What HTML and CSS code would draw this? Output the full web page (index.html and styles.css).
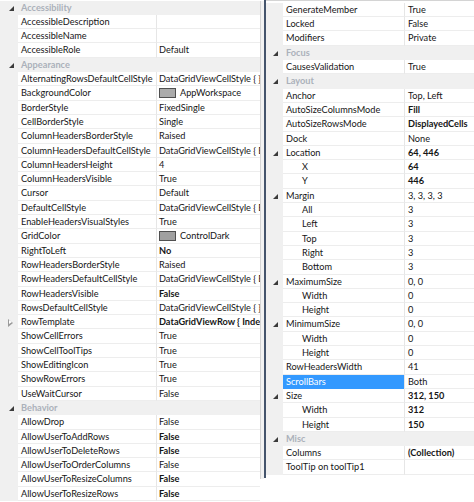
FILE: index.html
```html
<!DOCTYPE html>
<html>
<head>
<meta charset="utf-8">
<link rel="stylesheet" href="styles.css">
</head>
<body>
<div class="app">
  <div class="pane left">
    <div class="grid">
      <div class="row cat"><span class="gut"><span class="tri"></span></span><span class="catname">Accessibility</span></div>
      <div class="row"><span class="gut"></span><span class="name">AccessibleDescription</span><span class="val"></span></div>
      <div class="row"><span class="gut"></span><span class="name">AccessibleName</span><span class="val"></span></div>
      <div class="row"><span class="gut"></span><span class="name">AccessibleRole</span><span class="val">Default</span></div>
      <div class="row cat"><span class="gut"><span class="tri"></span></span><span class="catname">Appearance</span></div>
      <div class="row"><span class="gut"></span><span class="name">AlternatingRowsDefaultCellStyle</span><span class="val">DataGridViewCellStyle { }</span></div>
      <div class="row"><span class="gut"></span><span class="name">BackgroundColor</span><span class="val"><span class="swatch"></span>AppWorkspace</span></div>
      <div class="row"><span class="gut"></span><span class="name">BorderStyle</span><span class="val">FixedSingle</span></div>
      <div class="row"><span class="gut"></span><span class="name">CellBorderStyle</span><span class="val">Single</span></div>
      <div class="row"><span class="gut"></span><span class="name">ColumnHeadersBorderStyle</span><span class="val">Raised</span></div>
      <div class="row"><span class="gut"></span><span class="name">ColumnHeadersDefaultCellStyle</span><span class="val">DataGridViewCellStyle { BackColor=Color [Control] }</span></div>
      <div class="row"><span class="gut"></span><span class="name">ColumnHeadersHeight</span><span class="val">4</span></div>
      <div class="row"><span class="gut"></span><span class="name">ColumnHeadersVisible</span><span class="val">True</span></div>
      <div class="row"><span class="gut"></span><span class="name">Cursor</span><span class="val">Default</span></div>
      <div class="row"><span class="gut"></span><span class="name">DefaultCellStyle</span><span class="val">DataGridViewCellStyle { BackColor=Color [Window] }</span></div>
      <div class="row"><span class="gut"></span><span class="name">EnableHeadersVisualStyles</span><span class="val">True</span></div>
      <div class="row"><span class="gut"></span><span class="name">GridColor</span><span class="val"><span class="swatch dark"></span>ControlDark</span></div>
      <div class="row"><span class="gut"></span><span class="name">RightToLeft</span><span class="val b">No</span></div>
      <div class="row"><span class="gut"></span><span class="name">RowHeadersBorderStyle</span><span class="val">Raised</span></div>
      <div class="row"><span class="gut"></span><span class="name">RowHeadersDefaultCellStyle</span><span class="val">DataGridViewCellStyle { BackColor=Color [Control] }</span></div>
      <div class="row"><span class="gut"></span><span class="name">RowHeadersVisible</span><span class="val b">False</span></div>
      <div class="row"><span class="gut"></span><span class="name">RowsDefaultCellStyle</span><span class="val">DataGridViewCellStyle { }</span></div>
      <div class="row"><span class="gut"><span class="ctri"></span></span><span class="name">RowTemplate</span><span class="val b">DataGridViewRow { Index=-1 }</span></div>
      <div class="row"><span class="gut"></span><span class="name">ShowCellErrors</span><span class="val">True</span></div>
      <div class="row"><span class="gut"></span><span class="name">ShowCellToolTips</span><span class="val">True</span></div>
      <div class="row"><span class="gut"></span><span class="name">ShowEditingIcon</span><span class="val">True</span></div>
      <div class="row"><span class="gut"></span><span class="name">ShowRowErrors</span><span class="val">True</span></div>
      <div class="row"><span class="gut"></span><span class="name">UseWaitCursor</span><span class="val">False</span></div>
      <div class="row cat"><span class="gut"><span class="tri"></span></span><span class="catname">Behavior</span></div>
      <div class="row"><span class="gut"></span><span class="name">AllowDrop</span><span class="val">False</span></div>
      <div class="row"><span class="gut"></span><span class="name">AllowUserToAddRows</span><span class="val b">False</span></div>
      <div class="row"><span class="gut"></span><span class="name">AllowUserToDeleteRows</span><span class="val b">False</span></div>
      <div class="row"><span class="gut"></span><span class="name">AllowUserToOrderColumns</span><span class="val">False</span></div>
      <div class="row"><span class="gut"></span><span class="name">AllowUserToResizeColumns</span><span class="val b">False</span></div>
      <div class="row"><span class="gut"></span><span class="name">AllowUserToResizeRows</span><span class="val b">False</span></div>
    </div>
    <div class="scroll"></div>
  </div>
  <div class="sep"></div>
  <div class="pane right">
    <div class="grid">
      <div class="row"><span class="gut"></span><span class="name">GenerateMember</span><span class="val">True</span></div>
      <div class="row"><span class="gut"></span><span class="name">Locked</span><span class="val">False</span></div>
      <div class="row"><span class="gut"></span><span class="name">Modifiers</span><span class="val">Private</span></div>
      <div class="row cat"><span class="gut"><span class="tri"></span></span><span class="catname">Focus</span></div>
      <div class="row"><span class="gut"></span><span class="name">CausesValidation</span><span class="val">True</span></div>
      <div class="row cat"><span class="gut"><span class="tri"></span></span><span class="catname">Layout</span></div>
      <div class="row"><span class="gut"></span><span class="name">Anchor</span><span class="val">Top, Left</span></div>
      <div class="row"><span class="gut"></span><span class="name">AutoSizeColumnsMode</span><span class="val b">Fill</span></div>
      <div class="row"><span class="gut"></span><span class="name">AutoSizeRowsMode</span><span class="val b">DisplayedCells</span></div>
      <div class="row"><span class="gut"></span><span class="name">Dock</span><span class="val">None</span></div>
      <div class="row"><span class="gut"><span class="tri"></span></span><span class="name">Location</span><span class="val b">64, 446</span></div>
      <div class="row"><span class="gut"></span><span class="name sub">X</span><span class="val b">64</span></div>
      <div class="row"><span class="gut"></span><span class="name sub">Y</span><span class="val b">446</span></div>
      <div class="row"><span class="gut"><span class="tri"></span></span><span class="name">Margin</span><span class="val">3, 3, 3, 3</span></div>
      <div class="row"><span class="gut"></span><span class="name sub">All</span><span class="val">3</span></div>
      <div class="row"><span class="gut"></span><span class="name sub">Left</span><span class="val">3</span></div>
      <div class="row"><span class="gut"></span><span class="name sub">Top</span><span class="val">3</span></div>
      <div class="row"><span class="gut"></span><span class="name sub">Right</span><span class="val">3</span></div>
      <div class="row"><span class="gut"></span><span class="name sub">Bottom</span><span class="val">3</span></div>
      <div class="row"><span class="gut"><span class="tri"></span></span><span class="name">MaximumSize</span><span class="val">0, 0</span></div>
      <div class="row"><span class="gut"></span><span class="name sub">Width</span><span class="val">0</span></div>
      <div class="row"><span class="gut"></span><span class="name sub">Height</span><span class="val">0</span></div>
      <div class="row"><span class="gut"><span class="tri"></span></span><span class="name">MinimumSize</span><span class="val">0, 0</span></div>
      <div class="row"><span class="gut"></span><span class="name sub">Width</span><span class="val">0</span></div>
      <div class="row"><span class="gut"></span><span class="name sub">Height</span><span class="val">0</span></div>
      <div class="row"><span class="gut"></span><span class="name">RowHeadersWidth</span><span class="val">41</span></div>
      <div class="row sel"><span class="gut"></span><span class="name">ScrollBars</span><span class="val">Both</span></div>
      <div class="row"><span class="gut"><span class="tri"></span></span><span class="name">Size</span><span class="val b">312, 150</span></div>
      <div class="row"><span class="gut"></span><span class="name sub">Width</span><span class="val b">312</span></div>
      <div class="row"><span class="gut"></span><span class="name sub">Height</span><span class="val b">150</span></div>
      <div class="row cat"><span class="gut"><span class="tri"></span></span><span class="catname">Misc</span></div>
      <div class="row"><span class="gut"></span><span class="name">Columns</span><span class="val b">(Collection)</span></div>
      <div class="row"><span class="gut"></span><span class="name">ToolTip on toolTip1</span><span class="val"></span></div>
    </div>
  </div>
</div>
</body>
</html>
```
FILE: styles.css
```css
html, body {
  margin: 0;
  padding: 0;
  background: #ffffff;
}
body {
  font-family: "Lato", "Open Sans", sans-serif;
  font-size: 9.2px;
  color: #161616;
}
.app {
  display: flex;
  width: 474px;
  height: 502px;
  overflow: hidden;
}
.pane {
  display: flex;
  height: 502px;
}
.left {
  width: 264px;
  padding-top: 0.6px;
  box-sizing: border-box;
}
.left .grid {
  width: 260px;
}
.left .row {
  grid-template-columns: 18px 138px 1fr;
}
.scroll {
  width: 4px;
  height: 478px;
  background: #f2f2f2;
  border-left: 1px solid #d4d4d4;
  box-sizing: border-box;
}
.sep {
  width: 2px;
  height: 478px;
  background: #44546c;
}
.right {
  flex: 1;
  padding-top: 1.9px;
  box-sizing: border-box;
  border-top: 1px solid #d4d4d4;
  align-self: flex-start;
}
.right .grid {
  width: 208px;
}
.right .row {
  grid-template-columns: 17px 121px 1fr;
}
.row {
  display: grid;
  height: 14.3px;
  line-height: 13.3px;
  white-space: nowrap;
}
.gut {
  background: #f0f0f0;
  position: relative;
}
.name, .val {
  overflow: hidden;
  border-bottom: 1px solid #ededed;
  box-sizing: border-box;
  line-height: 13.3px;
}
.name {
  padding-left: 3px;
}
.name.sub {
  padding-left: 19px;
}
.val {
  border-left: 1px solid #e6e6e6;
  padding-left: 2px;
  display: flex;
  align-items: center;
}
.right .val {
  padding-left: 3px;
}
.b {
  font-weight: 700;
}
.cat {
  background: #f0f0f0;
}
.catname {
  grid-column: 2 / 4;
  padding-left: 3px;
  color: #abb1ba;
  font-weight: 700;
  line-height: 14.3px;
}
.sel .name {
  background: #3399ff;
  color: #ffffff;
  border-bottom-color: #3399ff;
}
.tri {
  position: absolute;
  left: 9px;
  top: 5px;
  width: 0;
  height: 0;
  border-style: solid;
  border-width: 0 0 5px 5px;
  border-color: transparent transparent #3a3a3a transparent;
}
.right .tri {
  left: 7px;
}
.ctri {
  position: absolute;
  left: 8px;
  top: 3.5px;
  width: 0;
  height: 0;
  border-style: solid;
  border-width: 4px 0 4px 5px;
  border-color: transparent transparent transparent #9a9a9a;
}
.ctri::after {
  content: "";
  position: absolute;
  left: -4px;
  top: -2.5px;
  border-style: solid;
  border-width: 2.5px 0 2.5px 3px;
  border-color: transparent transparent transparent #ffffff;
}
.swatch {
  display: inline-block;
  width: 15px;
  height: 8px;
  border: 1px solid #505050;
  background: #ababab;
  margin-right: 4px;
  flex: none;
}
.swatch.dark {
  background: #a0a0a0;
}
```
